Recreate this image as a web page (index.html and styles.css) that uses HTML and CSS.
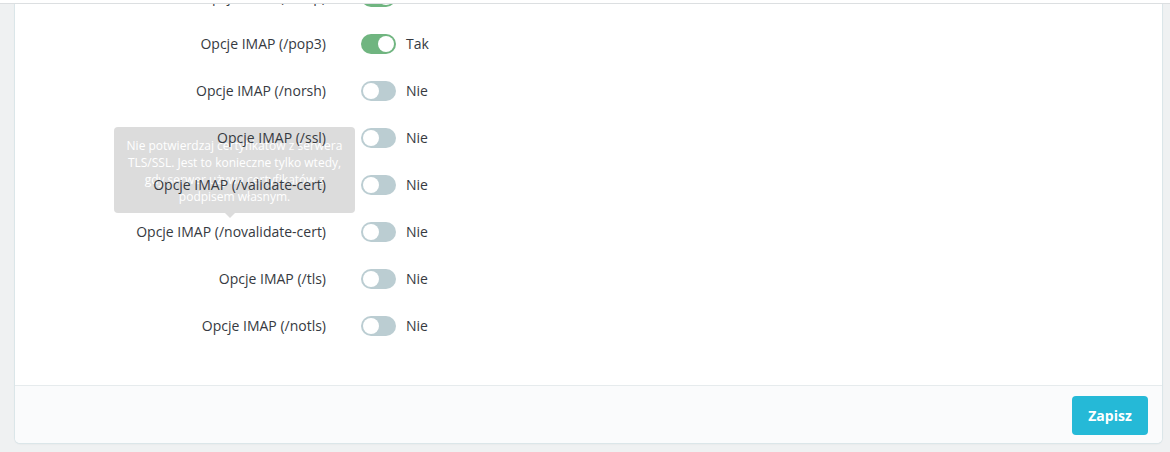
FILE: index.html
```html
<!DOCTYPE html>
<html lang="pl">
<head>
<meta charset="utf-8">
<title>Opcje IMAP</title>
<link rel="stylesheet" href="styles.css">
</head>
<body>
<div class="topbar"></div>
<div class="card">
  <div class="card-body">
    <div class="row"><div class="label"><span class="txt">Opcje IMAP (/imap)</span></div><div class="ctrl"><span class="switch on"></span><span class="val">Tak</span></div></div>
    <div class="row"><div class="label"><span class="txt">Opcje IMAP (/pop3)</span></div><div class="ctrl"><span class="switch on"></span><span class="val">Tak</span></div></div>
    <div class="row"><div class="label"><span class="txt">Opcje IMAP (/norsh)</span></div><div class="ctrl"><span class="switch"></span><span class="val">Nie</span></div></div>
    <div class="row"><div class="label"><span class="txt">Opcje IMAP (/ssl)</span></div><div class="ctrl"><span class="switch"></span><span class="val">Nie</span></div></div>
    <div class="row"><div class="label"><span class="txt">Opcje IMAP (/validate-cert)</span></div><div class="ctrl"><span class="switch"></span><span class="val">Nie</span></div></div>
    <div class="row">
      <div class="tooltip">Nie potwierdzaj certyfikatów z serwera TLS/SSL. Jest to konieczne tylko wtedy, gdy serwer używa certyfikatów z podpisem własnym.</div>
      <div class="label"><span class="txt">Opcje IMAP (/novalidate-cert)</span></div><div class="ctrl"><span class="switch"></span><span class="val">Nie</span></div></div>
    <div class="row"><div class="label"><span class="txt">Opcje IMAP (/tls)</span></div><div class="ctrl"><span class="switch"></span><span class="val">Nie</span></div></div>
    <div class="row"><div class="label"><span class="txt">Opcje IMAP (/notls)</span></div><div class="ctrl"><span class="switch"></span><span class="val">Nie</span></div></div>
  </div>
  <div class="card-footer">
    <button class="btn">Zapisz</button>
  </div>
</div>
</body>
</html>
```
FILE: styles.css
```css
html, body {
  margin: 0;
  padding: 0;
}
body {
  background: #eff1f2;
  font-family: "Open Sans", "Noto Sans", sans-serif;
  font-size: 14px;
  color: #363a41;
  overflow: hidden;
  height: 452px;
}
.topbar {
  position: absolute;
  top: 0;
  left: 0;
  right: 0;
  height: 3px;
  background: #fff;
  border-bottom: 1px solid #dcdfe1;
  z-index: 10;
}
.card {
  margin: -27px 0 0 15px;
  width: 1147px;
  background: #fff;
  border-radius: 5px;
  box-shadow: 0 0 0 1px #dbe6e9, 0 1px 2px rgba(0,0,0,0.08);
}
.card-body {
  padding-bottom: 36px;
}
.row {
  position: relative;
  height: 47px;
  display: grid;
  grid-template-columns: 311px 1fr;
  column-gap: 35px;
  align-items: center;
}
.label {
  text-align: right;
}
.txt {
  position: relative;
  z-index: 1;
  line-height: 19px;
}
.ctrl {
  display: flex;
  align-items: center;
  gap: 10px;
}
.switch {
  position: relative;
  width: 35px;
  height: 20px;
  border-radius: 10px;
  background: #bbcdd2;
  display: inline-block;
}
.switch::after {
  content: "";
  position: absolute;
  top: 2px;
  left: 2px;
  width: 16px;
  height: 16px;
  border-radius: 50%;
  background: #fff;
}
.switch.on {
  background: #70b580;
}
.switch.on::after {
  left: 17px;
}
.val {
  line-height: 19px;
}
.tooltip {
  position: absolute;
  z-index: 0;
  top: -81px;
  left: 99px;
  width: 241px;
  height: 86px;
  box-sizing: border-box;
  padding: 10px 8px;
  background: #dcdcdc;
  color: #fff;
  border-radius: 4px;
  font-size: 12px;
  line-height: 17px;
  text-align: center;
}
.tooltip::after {
  content: "";
  position: absolute;
  bottom: -5px;
  left: 111px;
  border-left: 5px solid transparent;
  border-right: 5px solid transparent;
  border-top: 5px solid #dcdcdc;
}
.card-footer {
  border-top: 1px solid #e6ebed;
  background: #fafbfc;
  border-radius: 0 0 5px 5px;
  padding: 10px 14px 8px;
  display: flex;
  justify-content: flex-end;
}
.btn {
  height: 39px;
  width: 76px;
  border: none;
  border-radius: 4px;
  background: #25b9d7;
  color: #fff;
  font-family: "Open Sans", "Noto Sans", sans-serif;
  font-size: 14px;
  font-weight: 700;
  padding: 0;
}
```
